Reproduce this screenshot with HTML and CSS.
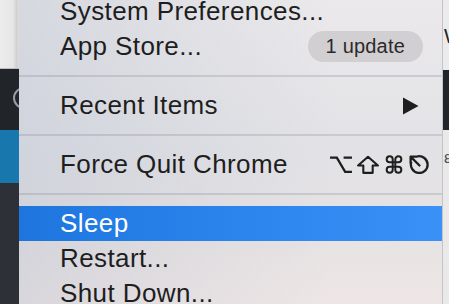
FILE: index.html
```html
<!DOCTYPE html>
<html lang="en">
<head>
    <meta charset="UTF-8">
    <meta name="viewport" content="width=device-width, initial-scale=1.0">
    <title>Apple Menu</title>
    <link rel="stylesheet" href="styles.css">
</head>
<body>
    <div class="desk-left">
        <div class="dl-light"></div>
        <div class="dl-dark"><span class="dl-ring"></span></div>
        <div class="dl-blue"></div>
        <div class="dl-slate"></div>
    </div>

    <div class="menu">
        <div class="item"><span class="label">System Preferences...</span></div>
        <div class="item">
            <span class="label">App Store...</span>
            <span class="badge">1 update</span>
        </div>
        <div class="sep"></div>
        <div class="item">
            <span class="label">Recent Items</span>
            <svg class="submenu" width="17" height="18" viewBox="0 0 17 18"><path d="M1 0.5 L16.5 9 L1 17.5 Z" fill="#1e1e1e"/></svg>
        </div>
        <div class="sep"></div>
        <div class="item">
            <span class="label">Force Quit Chrome</span>
            <span class="keys">
                <svg width="24" height="19" viewBox="0 0 23 18"><path d="M1 2.5 H7.5 L15.5 16 H22 M14 2.5 H22" fill="none" stroke="#1e1e1e" stroke-width="2.2"/></svg>
                <svg width="24" height="19" viewBox="0 0 23 18"><path d="M11.5 1.6 L21 10 H16 V17 H7 V10 H2 Z" fill="none" stroke="#1e1e1e" stroke-width="2" stroke-linejoin="round"/></svg>
                <svg width="22" height="19" viewBox="0 0 24 22"><path d="M17 1.5a3.5 3.5 0 0 0-3.5 3.5v12a3.5 3.5 0 0 0 3.5 3.5 3.5 3.5 0 0 0 3.5-3.5 3.5 3.5 0 0 0-3.5-3.5H7a3.5 3.5 0 0 0-3.5 3.5 3.5 3.5 0 0 0 3.5 3.5 3.5 3.5 0 0 0 3.5-3.5V5A3.5 3.5 0 0 0 7 1.5 3.5 3.5 0 0 0 3.5 5 3.5 3.5 0 0 0 7 8.5h10A3.5 3.5 0 0 0 20.5 5 3.5 3.5 0 0 0 17 1.5z" fill="none" stroke="#1e1e1e" stroke-width="2.3"/></svg>
                <svg width="23" height="19" viewBox="0 0 22 18"><path d="M3.2 6.5 A8 8 0 1 0 9 1.3" fill="none" stroke="#1e1e1e" stroke-width="2.2"/><path d="M2.5 1.5 L11 10 M2.5 1.5 H8.5 M2.5 1.5 V7.5" fill="none" stroke="#1e1e1e" stroke-width="2.2" stroke-linecap="round"/></svg>
            </span>
        </div>
        <div class="sep"></div>
        <div class="item selected"><span class="label">Sleep</span></div>
        <div class="item"><span class="label">Restart...</span></div>
        <div class="item"><span class="label">Shut Down...</span></div>
    </div>

    <div class="desk-right">
        <div class="dr-light"><span class="dr-glyph">W</span></div>
        <div class="dr-dark"></div>
        <div class="dr-rest"><span class="dr-glyph small">ε</span></div>
    </div>
</body>
</html>
```

FILE: styles.css
```css
html, body {
    margin: 0;
    height: 100%;
    overflow: hidden;
}
body {
    display: flex;
    font-family: "Liberation Sans", Arial, sans-serif;
    background: #ebebeb;
}

/* desktop behind the menu, left side */
.desk-left {
    width: 19px;
    flex: none;
    display: flex;
    flex-direction: column;
}
.dl-light {
    height: 68px;
    background: linear-gradient(to right, #ececec 0, #e6e6e6 13px, #cfcfcf 17px, #e0e0e0 19px);
    border-bottom: 1px solid #bdbdbd;
}
.dl-dark {
    height: 61px;
    background: #212529;
    position: relative;
    overflow: hidden;
}
.dl-ring {
    position: absolute;
    left: 13px;
    top: 18px;
    width: 18px;
    height: 18px;
    border: 2px solid #9a9da2;
    border-radius: 50%;
}
.dl-blue {
    height: 53px;
    background: #1877ad;
}
.dl-slate {
    flex: 1;
    background: #2d3137;
}

/* the menu itself */
.menu {
    width: 424px;
    flex: none;
    margin-top: -6px;
    box-sizing: border-box;
    border-right: 1px solid #c4c4c6;
    background:
        linear-gradient(to right, rgba(170, 182, 200, 0.32) 0, rgba(170, 182, 200, 0.12) 45%, rgba(170, 182, 200, 0) 75%),
        linear-gradient(to bottom, #ebe9eb 0, #e6e5e8 30%, #e2e2e6 50%, #e6e2e3 75%, #eee6e6 100%);
    color: #1e1e1e;
}
.item {
    height: 35px;
    display: flex;
    align-items: center;
    padding: 0 11px 0 41px;
    font-size: 26px;
    line-height: 35px;
    letter-spacing: 0.4px;
}
.label {
    flex: 1;
    white-space: nowrap;
}
.item.selected {
    background: linear-gradient(to right, #1e75de 0, #2a84ec 50%, #3a91f7 100%);
    color: #fff;
}
.sep {
    height: 2px;
    margin: 11px 0;
    background: rgba(110, 112, 125, 0.22);
}
.badge {
    height: 31px;
    line-height: 31px;
    padding: 0 18px;
    margin-right: 8px;
    border-radius: 16px;
    background: #d2cfd2;
    font-size: 20px;
    letter-spacing: 0.2px;
    color: #2a2a2a;
}
.submenu {
    margin-right: 12px;
}
.keys {
    display: flex;
    gap: 3px;
    align-items: center;
}

/* desktop behind the menu, right side */
.desk-right {
    flex: 1;
    display: flex;
    flex-direction: column;
    overflow: hidden;
}
.dr-light {
    height: 70px;
    background: #ebebeb;
    position: relative;
}
.dr-dark {
    height: 60px;
    background: #212529;
}
.dr-rest {
    flex: 1;
    background: #e9e9e9;
    position: relative;
}
.dr-glyph {
    position: absolute;
    left: 1px;
    top: 25px;
    font-size: 20px;
    color: #222;
}
.dr-glyph.small {
    top: 19px;
    font-size: 16px;
    color: #555;
}
```
